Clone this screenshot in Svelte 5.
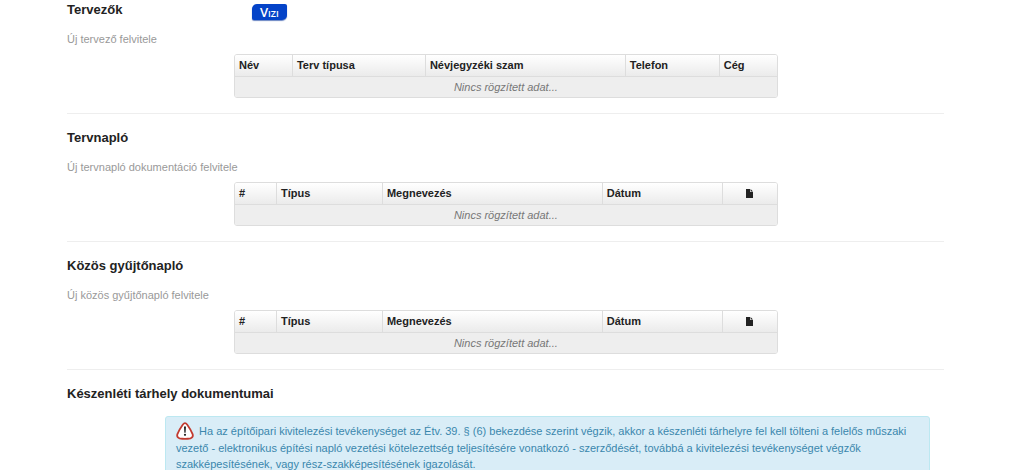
<script>
  const documentColumns = [
    { label: '#', width: 41 },
    { label: 'Típus', width: 106 },
    { label: 'Megnevezés', width: 220 },
    { label: 'Dátum', width: 120 },
    { label: 'Dokumentum', width: 55, icon: true }
  ];

  const sections = [
    {
      title: 'Tervezők',
      badge: 'Vizi',
      link: 'Új tervező felvitele',
      columns: [
        { label: 'Név', width: 57 },
        { label: 'Terv típusa', width: 133 },
        { label: 'Névjegyzéki szam', width: 200 },
        { label: 'Telefon', width: 94 },
        { label: 'Cég', width: 58 }
      ]
    },
    { title: 'Tervnapló', link: 'Új tervnapló dokumentáció felvitele', columns: documentColumns },
    { title: 'Közös gyűjtőnapló', link: 'Új közös gyűjtőnapló felvitele', columns: documentColumns }
  ];

  function share(column, columns) {
    const total = columns.reduce((sum, c) => sum + c.width, 0);
    return `${(column.width / total) * 100}%`;
  }
</script>

<main>
  {#each sections as section}
    <section>
      <header>
        <h2>{section.title}</h2>
        {#if section.badge}
          <span class="badge">{section.badge}</span>
        {/if}
      </header>
      <a class="add" href="#add">{section.link}</a>
      <div class="table-box">
        <table>
          <colgroup>
            {#each section.columns as column}
              <col style="width: {share(column, section.columns)}" />
            {/each}
          </colgroup>
          <thead>
            <tr>
              {#each section.columns as column}
                {#if column.icon}
                  <th class="file" aria-label={column.label}>
                    <svg viewBox="0 0 7 9" width="7" height="9" aria-hidden="true">
                      <path d="M0 0H4V3H7V9H0ZM4.6 0L7 2.5H4.6Z" fill="#222" />
                    </svg>
                  </th>
                {:else}
                  <th>{column.label}</th>
                {/if}
              {/each}
            </tr>
          </thead>
          <tbody>
            <tr>
              <td colspan={section.columns.length}>Nincs rögzített adat...</td>
            </tr>
          </tbody>
        </table>
      </div>
    </section>
  {/each}

  <section>
    <header>
      <h2>Készenléti tárhely dokumentumai</h2>
    </header>
    <div class="notice">
      <svg class="warning" viewBox="0 0 18 18" width="18" height="18" aria-hidden="true">
        <path
          d="M6.9 2.5Q9 -0.3 11.1 2.5Q14.8 7.6 16.7 12.4Q17.4 15.5 14.4 16.3Q9 17.3 3.6 16.3Q0.6 15.5 1.3 12.4Q3.2 7.6 6.9 2.5Z"
          fill="#fff"
          stroke="#c23b30"
          stroke-width="1.8"
        />
        <path d="M8 4.5H10L9.6 10.8H8.4Z" fill="#222" />
        <circle cx="9" cy="12.8" r="1.1" fill="#222" />
      </svg>
      Ha az építőipari kivitelezési tevékenységet az Étv. 39. § (6) bekezdése szerint végzik, akkor
      a készenléti tárhelyre fel kell tölteni a felelős műszaki vezető - elektronikus építési napló
      vezetési kötelezettség teljesítésére vonatkozó - szerződését, továbbá a kivitelezési
      tevékenységet végzők szakképesítésének, vagy rész-szakképesítésének igazolását.
    </div>
  </section>
</main>

<style>
  :global(body) {
    margin: 0;
    background: #fff;
  }

  main {
    padding: 0 80px 0 67px;
    font-family: 'Liberation Sans', Arial, sans-serif;
    font-size: 11px;
    line-height: 18px;
    color: #333;
  }

  section {
    padding-bottom: 15px;
  }

  section + section {
    padding-top: 14px;
    border-top: 1px solid #eee;
  }

  header {
    display: grid;
    grid-template-columns: 185px auto;
    justify-content: start;
    height: 18px;
    margin-bottom: 12px;
  }

  h2 {
    margin: 0;
    font-size: 13px;
    line-height: 20px;
    white-space: nowrap;
    color: #222;
  }

  .badge {
    align-self: start;
    height: 16px;
    margin-top: 4px;
    padding: 0 8px;
    border-radius: 5px 2px;
    background: #0443c8;
    box-shadow: 0 1px 1px #6a86c4;
    color: #fff;
    font-family: 'Open Sans', sans-serif;
    font-size: 13px;
    font-weight: 600;
    font-variant: small-caps;
    line-height: 16px;
  }

  .add {
    display: block;
    color: #999;
    text-decoration: none;
  }

  .table-box {
    width: 62%;
    box-sizing: border-box;
    margin: 6px auto 0 167px;
    border: 1px solid #ddd;
    border-radius: 3px;
    overflow: hidden;
  }

  table {
    width: 100%;
    table-layout: fixed;
    border-collapse: separate;
    border-spacing: 0;
  }

  thead tr {
    background: linear-gradient(#fff, #ebebeb);
  }

  th,
  td {
    height: 20px;
    padding: 0 4px;
    line-height: 18px;
  }

  th {
    padding-bottom: 1px;
    text-align: left;
    color: #222;
  }

  th + th {
    border-left: 1px solid #ddd;
  }

  .file {
    text-align: center;
  }

  .file svg {
    display: inline-block;
    vertical-align: -1px;
  }

  td {
    border-top: 1px solid #ddd;
    background: #eee;
    color: #777;
    font-style: italic;
    text-align: center;
  }

  .notice {
    margin: 14px 14px 0 98px;
    padding: 5px 20px 5px 10px;
    border: 1px solid #bce8f1;
    border-radius: 3px;
    background: #d9edf7;
    color: #3a87ad;
    line-height: 16px;
  }

  .warning {
    margin-right: 2px;
    vertical-align: -5px;
  }
</style>
